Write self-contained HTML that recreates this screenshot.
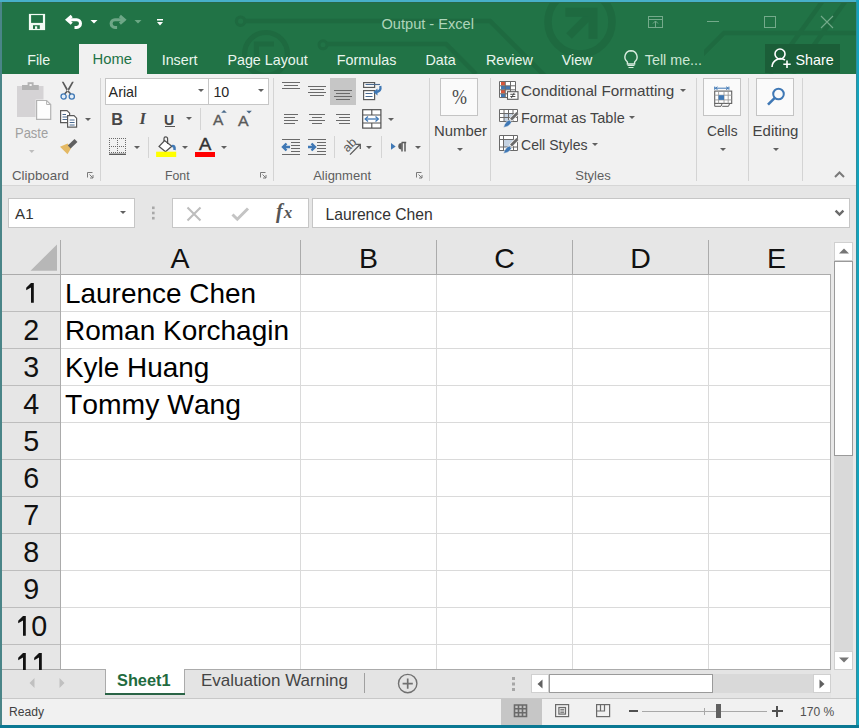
<!DOCTYPE html>
<html><head><meta charset="utf-8"><style>
html,body{margin:0;padding:0;}
body{width:859px;height:728px;position:relative;overflow:hidden;font-family:"Liberation Sans",sans-serif;}
.a{position:absolute;}
.t{position:absolute;line-height:1;white-space:nowrap;}
svg{display:block;overflow:visible}
</style></head><body>
<div class="a" style="left:0px;top:0px;width:859px;height:728px;background:#4a8588;"></div>
<div class="a" style="left:0px;top:0px;width:859px;height:2px;background:#47b0c9;"></div>
<div class="a" style="left:856px;top:0px;width:3px;height:728px;background:#14a3bd;"></div>
<div class="a" style="left:856px;top:2px;width:1px;height:723px;background:#2f8f9e;"></div>
<div class="a" style="left:0px;top:725px;width:859px;height:3px;background:#0b7893;"></div>
<div class="a" style="left:2px;top:2px;width:854px;height:72px;background:#217346;"></div>
<div class="a" style="left:2px;top:2px;width:854px;height:1px;background:#2a6848;"></div>
<svg class="a" style="left:0px;top:0px;" width="859" height="74" viewBox="0 0 859 74">
<clipPath id="tbc"><rect x="2" y="3" width="854" height="71"/></clipPath>
<g stroke="#1e6a40" fill="none" clip-path="url(#tbc)">
<circle cx="240.6" cy="21.2" r="4.2" stroke-width="3.2"/>
<path d="M245 21 H490 L545 76" stroke-width="4.5"/>
<circle cx="323" cy="44.8" r="4" stroke-width="3"/>
<path d="M327 44 H446 L476 74" stroke-width="4.5"/>
<circle cx="266" cy="53.9" r="21.4" stroke-width="5.2"/>
<path d="M256.4 66 V44 H274" stroke-width="5"/>
<circle cx="580" cy="22" r="32" stroke-width="7.5"/>
<path d="M569 36 L591 14" stroke-width="8"/>
<path d="M565.4 12.2 H593 V38.7" stroke-width="9"/>
<path d="M690 67 L724 33 H856" stroke-width="4.5"/>
<path d="M770 74 L822 2" stroke-width="4.5"/>
<path d="M793 74 L845 2" stroke-width="4.5"/>
</g></svg>
<div class="a" style="left:612px;top:44px;width:92px;height:30px;background:#217346;"></div>
<svg class="a" style="left:26px;top:12px;" width="22" height="20" viewBox="0 0 22 20">
<rect x="2.9" y="1.9" width="16.2" height="16.2" fill="#f2fbf4"/>
<rect x="5.1" y="3.1" width="11.8" height="7.8" fill="#217346"/>
<rect x="7" y="13.2" width="6.8" height="3.7" fill="#217346"/>
<rect x="9" y="14.3" width="2.2" height="2.6" fill="#f2fbf4"/></svg>
<svg class="a" style="left:62px;top:13px;" width="24" height="18" viewBox="0 0 24 18">
<path d="M5.3 6.8 H14.7 A3.8 3.8 0 0 1 14.7 14.4 H12.5" fill="none" stroke="#ffffff" stroke-width="3"/>
<path d="M9.7 3 L5.3 6.8 L9.7 10.6" fill="none" stroke="#ffffff" stroke-width="3"/></svg>
<svg class="a" style="left:89px;top:18px;" width="10" height="7" viewBox="0 0 10 7"><path d="M1.5 2 H8.5 L5 5.5 Z" fill="#ffffff"/></svg>
<svg class="a" style="left:106px;top:13px;" width="24" height="18" viewBox="0 0 24 18">
<path d="M18.3 6.8 H8.9 A3.8 3.8 0 0 0 8.9 14.4 H11.1" fill="none" stroke="#6ea787" stroke-width="3"/>
<path d="M13.9 3 L18.3 6.8 L13.9 10.6" fill="none" stroke="#6ea787" stroke-width="3"/></svg>
<svg class="a" style="left:133px;top:18px;" width="10" height="7" viewBox="0 0 10 7"><path d="M1.5 2 H8.5 L5 5.5 Z" fill="#6aa884"/></svg>
<svg class="a" style="left:155px;top:17px;" width="10" height="11" viewBox="0 0 10 11"><rect x="2" y="2" width="6" height="1.5" fill="#ffffff"/><path d="M2 5 H8 L5 8.5 Z" fill="#ffffff"/></svg>
<svg class="a" style="left:646px;top:14px;" width="19" height="16" viewBox="0 0 19 16"><rect x="2.5" y="2.5" width="14" height="11" fill="none" stroke="#74aa8b" stroke-width="1"/><path d="M2.5 5.5 H16.5 M9.5 13 V7 M7 9.5 L9.5 7 L12 9.5" fill="none" stroke="#74aa8b" stroke-width="1"/></svg>
<svg class="a" style="left:705px;top:19px;" width="16" height="5" viewBox="0 0 16 5"><path d="M2 2.5 H14" stroke="#74aa8b" stroke-width="1"/></svg>
<svg class="a" style="left:762px;top:14px;" width="16" height="16" viewBox="0 0 16 16"><rect x="2.5" y="2.5" width="11" height="11" fill="none" stroke="#74aa8b" stroke-width="1"/></svg>
<svg class="a" style="left:819px;top:14px;" width="16" height="16" viewBox="0 0 16 16"><path d="M2 2 L14 14 M14 2 L2 14" stroke="#74aa8b" stroke-width="1.1"/></svg>
<div class="t" style="left:381.50px;top:17.44px;font-size:14.6px;color:#aed5ba;">Output - Excel</div>
<div class="a" style="left:79px;top:44px;width:68px;height:30px;background:#f1f1f1;"></div>
<div class="t" style="left:27.20px;top:52.90px;font-size:14.3px;color:#eaf6ee;">File</div>
<div class="t" style="left:161.70px;top:52.90px;font-size:14.3px;color:#eaf6ee;">Insert</div>
<div class="t" style="left:227.40px;top:52.90px;font-size:14.3px;color:#eaf6ee;">Page Layout</div>
<div class="t" style="left:336.80px;top:52.90px;font-size:14.3px;color:#eaf6ee;">Formulas</div>
<div class="t" style="left:425.50px;top:52.90px;font-size:14.3px;color:#eaf6ee;">Data</div>
<div class="t" style="left:485.90px;top:52.90px;font-size:14.3px;color:#eaf6ee;">Review</div>
<div class="t" style="left:561.70px;top:52.90px;font-size:14.3px;color:#eaf6ee;">View</div>
<div class="t" style="left:92.50px;top:51.97px;font-size:14.8px;color:#217346;">Home</div>
<svg class="a" style="left:622px;top:48px;" width="18" height="22" viewBox="0 0 18 22"><path d="M9 2.7 A6.3 6.3 0 0 1 12.6 14 V16 H5.4 V14 A6.3 6.3 0 0 1 9 2.7 Z" fill="none" stroke="#d8ecdf" stroke-width="1.4"/><path d="M5.5 17.5 H12.5 M6.5 19.5 H11.5" stroke="#d8ecdf" stroke-width="1.2"/></svg>
<div class="t" style="left:644.80px;top:52.90px;font-size:14.3px;color:#cde6d5;">Tell me...</div>
<div class="a" style="left:765px;top:44px;width:75px;height:29px;background:#1b5e38;"></div>
<svg class="a" style="left:769px;top:46px;" width="26" height="24" viewBox="0 0 26 24"><circle cx="11" cy="8" r="5" fill="none" stroke="#ffffff" stroke-width="1.6"/><path d="M3 21 A8.5 8.5 0 0 1 16 14" fill="none" stroke="#ffffff" stroke-width="1.6"/><path d="M18 14.5 V22 M14.3 18.3 H21.7" stroke="#ffffff" stroke-width="1.6"/></svg>
<div class="t" style="left:795.50px;top:53.40px;font-size:14.3px;color:#ffffff;">Share</div>
<div class="a" style="left:2px;top:74px;width:854px;height:111px;background:#f1f1f1;"></div>
<div class="a" style="left:2px;top:185px;width:854px;height:1px;background:#d6d6d6;"></div>
<svg class="a" style="left:14px;top:80px;" width="40" height="42" viewBox="0 0 40 42">
<rect x="3" y="6" width="26.5" height="31" fill="#d5d3d5"/>
<rect x="8" y="5" width="16.8" height="5" fill="#b3b3b3"/>
<rect x="13.6" y="2.2" width="6" height="3.5" fill="#b3b3b3"/>
<rect x="15.5" y="4" width="2.2" height="2" fill="#f1f1f1"/>
<path d="M21.6 19.5 H33 L37.7 24 V40.3 H21.6 Z" fill="#f1f1f1"/>
<path d="M22.6 20.5 H32.6 L36.7 24.5 V39.3 H22.6 Z" fill="#fdfdfd" stroke="#b3b3b3" stroke-width="1.2"/>
<path d="M32.6 20.5 V24.5 H36.7" fill="none" stroke="#b3b3b3" stroke-width="1"/></svg>
<div class="t" style="left:14.60px;top:125.88px;font-size:14.2px;color:#a0a0a0;transform:scaleX(0.9143);transform-origin:0 0;">Paste</div>
<svg class="a" style="left:27.5px;top:149px;" width="7.5" height="5" viewBox="0 0 7.5 5"><path d="M1 1 H6.5 L3.75 4 Z" fill="#bdbdbd"/></svg>
<svg class="a" style="left:58px;top:80px;" width="20" height="22" viewBox="0 0 20 22">
<path d="M3.8 1.8 L5.6 1.8 L10.6 10.5 L9.4 12.3 Z M15.8 1.8 L14 1.8 L8.9 10.5 L10.1 12.3 Z" fill="#5a5a5a"/>
<path d="M9.2 11.2 L6.6 14 M10.2 11.2 L12.8 14" stroke="#5a5a5a" stroke-width="1.6"/>
<circle cx="5.6" cy="16.5" r="2.6" fill="#e4eef8" stroke="#3f78b5" stroke-width="1.3"/>
<circle cx="13.8" cy="16.5" r="2.6" fill="#e4eef8" stroke="#3f78b5" stroke-width="1.3"/></svg>
<svg class="a" style="left:58px;top:108px;" width="22" height="22" viewBox="0 0 22 22">
<path d="M2.6 2.6 H9 L11.6 5.2 V14.6 H2.6 Z" fill="#fff" stroke="#5a5a5a" stroke-width="1.2"/>
<path d="M4.5 6.5 H8 M4.5 9 H9.5 M4.5 11.5 H9.5" stroke="#4a6a90" stroke-width="1"/>
<path d="M9.6 7.6 H16 L18.6 10.2 V19.2 H9.6 Z" fill="#fff" stroke="#5a5a5a" stroke-width="1.2"/>
<path d="M11.6 12 H16.6 M11.6 14.5 H16.6 M11.6 17 H16.6" stroke="#4a6a90" stroke-width="1"/></svg>
<svg class="a" style="left:84.2px;top:116.6px;" width="8" height="5" viewBox="0 0 8 5"><path d="M1 1 H7 L4.0 4 Z" fill="#606060"/></svg>
<svg class="a" style="left:58px;top:138px;" width="22" height="18" viewBox="0 0 22 18">
<path d="M2 8.7 L9.5 5.5 L13.2 10 L9.5 16.2 Z" fill="#e4b964"/>
<path d="M11.2 9 L18 2.5" stroke="#606060" stroke-width="4.2"/></svg>
<div class="t" style="left:12.00px;top:168.90px;font-size:13px;color:#5e5e5e;transform:scaleX(1.0244);transform-origin:0 0;">Clipboard</div>
<svg class="a" style="left:86px;top:171px;" width="9" height="9" viewBox="0 0 9 9"><path d="M1.5 6.5 V1.5 H6.5" fill="none" stroke="#7a7a7a" stroke-width="1"/><path d="M3.5 3.5 L7 7 M7 4 V7 H4" fill="none" stroke="#7a7a7a" stroke-width="1"/></svg>
<div class="a" style="left:100px;top:78px;width:1px;height:103px;background:#d4d4d4;"></div>
<div class="a" style="left:105px;top:78px;width:104px;height:27px;background:#ffffff;box-sizing:border-box;border:1px solid #c6c6c6;"></div>
<div class="a" style="left:208px;top:78px;width:61px;height:27px;background:#ffffff;box-sizing:border-box;border:1px solid #c6c6c6;"></div>
<div class="t" style="left:108.60px;top:84.50px;font-size:14.3px;color:#262626;">Arial</div>
<svg class="a" style="left:197px;top:88px;" width="8" height="5" viewBox="0 0 8 5"><path d="M1 1 H7 L4.0 4 Z" fill="#606060"/></svg>
<div class="t" style="left:213.40px;top:84.50px;font-size:14.3px;color:#262626;">10</div>
<svg class="a" style="left:257px;top:88px;" width="8" height="5" viewBox="0 0 8 5"><path d="M1 1 H7 L4.0 4 Z" fill="#606060"/></svg>
<div class="t" style="left:111.30px;top:110.89px;font-size:16.2px;color:#474747;font-weight:bold;">B</div>
<div class="t" style="left:139.60px;top:110.63px;font-size:16.5px;color:#474747;font-weight:bold;font-style:italic;font-family:Liberation Serif,serif;">I</div>
<div class="t" style="left:163.60px;top:111.90px;font-size:15px;color:#474747;font-weight:bold;transform:scaleX(0.9416);transform-origin:0 0;">U</div>
<div class="a" style="left:164.5px;top:126px;width:10.0px;height:1.2999999999999972px;background:#555;"></div>
<svg class="a" style="left:185px;top:116px;" width="8" height="5" viewBox="0 0 8 5"><path d="M1 1 H7 L4.0 4 Z" fill="#606060"/></svg>
<div class="a" style="left:200px;top:108px;width:1px;height:22px;background:#d4d4d4;"></div>
<div class="t" style="left:213.00px;top:111.88px;font-size:15.5px;color:#5a5a5a;-webkit-text-stroke:0.35px #5a5a5a;">A</div>
<svg class="a" style="left:220px;top:109px;" width="9" height="6" viewBox="0 0 9 6"><path d="M1.2 3.8 H6.8 L4 1 Z" fill="#4a6a8a"/></svg>
<div class="t" style="left:237.80px;top:112.78px;font-size:15.5px;color:#5a5a5a;transform:scaleX(1.0253);transform-origin:0 0;-webkit-text-stroke:0.35px #5a5a5a;">A</div>
<svg class="a" style="left:245px;top:109px;" width="9" height="6" viewBox="0 0 9 6"><path d="M1.3 1.7 H6.9 L4.1 4.5 Z" fill="#4a6a8a"/></svg>
<svg class="a" style="left:0;top:0" width="859" height="728"><path d="M109 138h1v1h-1zM109 146h1v1h-1zM109 152h1v1h-1zM111 138h1v1h-1zM111 146h1v1h-1zM111 152h1v1h-1zM113 138h1v1h-1zM113 146h1v1h-1zM113 152h1v1h-1zM115 138h1v1h-1zM115 146h1v1h-1zM115 152h1v1h-1zM117 138h1v1h-1zM117 146h1v1h-1zM117 152h1v1h-1zM119 138h1v1h-1zM119 146h1v1h-1zM119 152h1v1h-1zM121 138h1v1h-1zM121 146h1v1h-1zM121 152h1v1h-1zM123 138h1v1h-1zM123 146h1v1h-1zM123 152h1v1h-1zM125 138h1v1h-1zM125 146h1v1h-1zM125 152h1v1h-1zM109 138h1v1h-1zM117 138h1v1h-1zM125 138h1v1h-1zM109 140h1v1h-1zM117 140h1v1h-1zM125 140h1v1h-1zM109 142h1v1h-1zM117 142h1v1h-1zM125 142h1v1h-1zM109 144h1v1h-1zM117 144h1v1h-1zM125 144h1v1h-1zM109 146h1v1h-1zM117 146h1v1h-1zM125 146h1v1h-1zM109 148h1v1h-1zM117 148h1v1h-1zM125 148h1v1h-1zM109 150h1v1h-1zM117 150h1v1h-1zM125 150h1v1h-1zM109 152h1v1h-1zM117 152h1v1h-1zM125 152h1v1h-1z" fill="#6a6a6a"/><rect x="109" y="153.6" width="17" height="1.4" fill="#5a5a5a"/></svg>
<svg class="a" style="left:133.4px;top:145px;" width="8" height="5" viewBox="0 0 8 5"><path d="M1 1 H7 L4.0 4 Z" fill="#606060"/></svg>
<div class="a" style="left:148px;top:137px;width:1px;height:21px;background:#d4d4d4;"></div>
<svg class="a" style="left:154px;top:135px;" width="24" height="24" viewBox="0 0 24 24">
<path d="M5.1 11.4 L10.6 5.6 L17.8 11.2 L11.5 16.7 Z" fill="#fff" stroke="#505050" stroke-width="1.3"/>
<path d="M10 6.2 V3.6 A1.8 1.8 0 0 1 13.6 3.6 V9" fill="none" stroke="#505050" stroke-width="1.2"/>
<path d="M17.8 11.2 Q21 10 20.5 15" fill="none" stroke="#3f78b5" stroke-width="2.6"/>
<rect x="2.1" y="16.7" width="20.1" height="5.3" fill="#ffff00"/></svg>
<svg class="a" style="left:181px;top:145px;" width="8" height="5" viewBox="0 0 8 5"><path d="M1 1 H7 L4.0 4 Z" fill="#606060"/></svg>
<div class="t" style="left:198.70px;top:136.41px;font-size:17px;color:#333;transform:scaleX(1.0848);transform-origin:0 0;-webkit-text-stroke:0.4px #333;">A</div>
<div class="a" style="left:195px;top:152px;width:20px;height:5px;background:#ff0000;"></div>
<svg class="a" style="left:220px;top:145px;" width="8" height="5" viewBox="0 0 8 5"><path d="M1 1 H7 L4.0 4 Z" fill="#606060"/></svg>
<div class="t" style="left:165.20px;top:168.60px;font-size:13px;color:#5e5e5e;transform:scaleX(0.9457);transform-origin:0 0;">Font</div>
<svg class="a" style="left:259px;top:171px;" width="9" height="9" viewBox="0 0 9 9"><path d="M1.5 6.5 V1.5 H6.5" fill="none" stroke="#7a7a7a" stroke-width="1"/><path d="M3.5 3.5 L7 7 M7 4 V7 H4" fill="none" stroke="#7a7a7a" stroke-width="1"/></svg>
<div class="a" style="left:273px;top:78px;width:1px;height:103px;background:#d4d4d4;"></div>
<div class="a" style="left:282px;top:82px;width:18px;height:1px;background:#6a6a6a;"></div>
<div class="a" style="left:284px;top:85px;width:14px;height:1px;background:#6a6a6a;"></div>
<div class="a" style="left:282px;top:88px;width:18px;height:1px;background:#6a6a6a;"></div>
<div class="a" style="left:308px;top:86px;width:18px;height:1px;background:#6a6a6a;"></div>
<div class="a" style="left:310px;top:89px;width:14px;height:1px;background:#6a6a6a;"></div>
<div class="a" style="left:308px;top:92px;width:18px;height:1px;background:#6a6a6a;"></div>
<div class="a" style="left:310px;top:95px;width:14px;height:1px;background:#6a6a6a;"></div>
<div class="a" style="left:330px;top:78px;width:26px;height:27px;background:#c6c6c6;"></div>
<div class="a" style="left:334px;top:90px;width:18px;height:1px;background:#6a6a6a;"></div>
<div class="a" style="left:336px;top:93px;width:14px;height:1px;background:#6a6a6a;"></div>
<div class="a" style="left:334px;top:96px;width:18px;height:1px;background:#6a6a6a;"></div>
<div class="a" style="left:336px;top:99px;width:14px;height:1px;background:#6a6a6a;"></div>
<svg class="a" style="left:360px;top:80px;" width="24" height="22" viewBox="0 0 24 22">
<rect x="3.6" y="2.6" width="11" height="4.8" fill="#fff" stroke="#5a5a5a" stroke-width="1.2"/>
<path d="M5.5 4.5 H20" stroke="#4a6a90" stroke-width="1.1"/>
<rect x="3.6" y="10.6" width="11" height="9" fill="#fff" stroke="#5a5a5a" stroke-width="1.2"/>
<path d="M5.5 13.5 H12.5 M5.5 16.5 H12.5" stroke="#4a6a90" stroke-width="1.1"/>
<path d="M20.3 6 Q21.5 11.5 16 12" fill="none" stroke="#3f78b5" stroke-width="2.3"/>
<path d="M13.3 12 L17.5 8.6 L17.5 15.4 Z" fill="#3f78b5"/></svg>
<div class="a" style="left:284px;top:114px;width:14px;height:1px;background:#6a6a6a;"></div>
<div class="a" style="left:284px;top:117px;width:11px;height:1px;background:#6a6a6a;"></div>
<div class="a" style="left:284px;top:120px;width:14px;height:1px;background:#6a6a6a;"></div>
<div class="a" style="left:284px;top:123px;width:11px;height:1px;background:#6a6a6a;"></div>
<div class="a" style="left:309px;top:114px;width:16px;height:1px;background:#6a6a6a;"></div>
<div class="a" style="left:312px;top:117px;width:10px;height:1px;background:#6a6a6a;"></div>
<div class="a" style="left:309px;top:120px;width:16px;height:1px;background:#6a6a6a;"></div>
<div class="a" style="left:312px;top:123px;width:10px;height:1px;background:#6a6a6a;"></div>
<div class="a" style="left:336px;top:114px;width:14px;height:1px;background:#6a6a6a;"></div>
<div class="a" style="left:339px;top:117px;width:11px;height:1px;background:#6a6a6a;"></div>
<div class="a" style="left:336px;top:120px;width:14px;height:1px;background:#6a6a6a;"></div>
<div class="a" style="left:339px;top:123px;width:11px;height:1px;background:#6a6a6a;"></div>
<svg class="a" style="left:360px;top:107px;" width="24" height="24" viewBox="0 0 24 24">
<rect x="2.7" y="2.7" width="18.2" height="18.4" fill="#fff" stroke="#505050" stroke-width="1.2"/>
<path d="M2.7 8 H20.9 M2.7 16 H20.9 M11.8 2.7 V8 M11.8 16 V21" stroke="#505050" stroke-width="1.1"/>
<path d="M5.5 12 H18" stroke="#3f78b5" stroke-width="1.3"/>
<path d="M8 9.6 L5.2 12 L8 14.4 M15.5 9.6 L18.3 12 L15.5 14.4" fill="none" stroke="#3f78b5" stroke-width="1.3"/></svg>
<svg class="a" style="left:387.2px;top:116.5px;" width="8" height="5" viewBox="0 0 8 5"><path d="M1 1 H7 L4.0 4 Z" fill="#606060"/></svg>
<div class="a" style="left:282px;top:139px;width:18px;height:1px;background:#6a6a6a;"></div>
<div class="a" style="left:282px;top:154px;width:18px;height:1px;background:#6a6a6a;"></div>
<div class="a" style="left:291px;top:142px;width:9px;height:1px;background:#6a6a6a;"></div>
<div class="a" style="left:291px;top:145px;width:9px;height:1px;background:#6a6a6a;"></div>
<div class="a" style="left:291px;top:148px;width:9px;height:1px;background:#6a6a6a;"></div>
<div class="a" style="left:291px;top:151px;width:9px;height:1px;background:#6a6a6a;"></div>
<div class="a" style="left:308px;top:139px;width:18px;height:1px;background:#6a6a6a;"></div>
<div class="a" style="left:308px;top:154px;width:18px;height:1px;background:#6a6a6a;"></div>
<div class="a" style="left:317px;top:142px;width:9px;height:1px;background:#6a6a6a;"></div>
<div class="a" style="left:317px;top:145px;width:9px;height:1px;background:#6a6a6a;"></div>
<div class="a" style="left:317px;top:148px;width:9px;height:1px;background:#6a6a6a;"></div>
<div class="a" style="left:317px;top:151px;width:9px;height:1px;background:#6a6a6a;"></div>
<svg class="a" style="left:280px;top:140px;" width="12" height="14" viewBox="0 0 12 14"><path d="M3 7 H10 M6.5 3.5 L3 7 L6.5 10.5" fill="none" stroke="#3f78b5" stroke-width="2.4"/></svg>
<svg class="a" style="left:306px;top:140px;" width="12" height="14" viewBox="0 0 12 14"><path d="M2 7 H9 M5.5 3.5 L9 7 L5.5 10.5" fill="none" stroke="#3f78b5" stroke-width="2.4"/></svg>
<div class="a" style="left:334px;top:136px;width:1px;height:22px;background:#d4d4d4;"></div>
<svg class="a" style="left:340px;top:134px;" width="24" height="24" viewBox="0 0 24 24">
<text x="9.5" y="15" text-anchor="middle" font-family="Liberation Sans" font-size="12.5" fill="#5a5a5a" transform="rotate(-45 9.5 11)">ab</text>
<path d="M10 20.6 L20.3 10.3 M15.5 10.3 H20.3 V15.1" fill="none" stroke="#5a5a5a" stroke-width="1.3"/></svg>
<svg class="a" style="left:365px;top:145px;" width="8" height="5" viewBox="0 0 8 5"><path d="M1 1 H7 L4.0 4 Z" fill="#606060"/></svg>
<div class="a" style="left:381px;top:136px;width:1px;height:22px;background:#d4d4d4;"></div>
<svg class="a" style="left:388px;top:140px;" width="20" height="14" viewBox="0 0 20 14">
<path d="M3 3 L7.7 6.4 L3 9.8 Z" fill="#3f78b5"/>
<path d="M13.5 3 A3.2 3.2 0 0 0 13.5 9.4 Z" fill="#5a5a5a"/>
<path d="M13.6 2.5 H18.2 M14 2.5 V11.4 M17 2.5 V11.4" fill="none" stroke="#5a5a5a" stroke-width="1.5"/></svg>
<svg class="a" style="left:414px;top:145px;" width="8" height="5" viewBox="0 0 8 5"><path d="M1 1 H7 L4.0 4 Z" fill="#606060"/></svg>
<div class="t" style="left:313.20px;top:168.80px;font-size:13px;color:#5e5e5e;">Alignment</div>
<svg class="a" style="left:415px;top:171px;" width="9" height="9" viewBox="0 0 9 9"><path d="M1.5 6.5 V1.5 H6.5" fill="none" stroke="#7a7a7a" stroke-width="1"/><path d="M3.5 3.5 L7 7 M7 4 V7 H4" fill="none" stroke="#7a7a7a" stroke-width="1"/></svg>
<div class="a" style="left:429px;top:78px;width:1px;height:103px;background:#d4d4d4;"></div>
<div class="a" style="left:440px;top:78px;width:38px;height:37.5px;background:#fafafa;box-sizing:border-box;border:1px solid #c4c4c4;"></div>
<div class="t" style="left:451.60px;top:87.07px;font-size:20px;color:#4a4a4a;transform:scaleX(0.8997);transform-origin:0 0;font-family:Liberation Serif,serif;">%</div>
<div class="t" style="left:433.80px;top:123.10px;font-size:15px;color:#444;transform:scaleX(0.9934);transform-origin:0 0;">Number</div>
<svg class="a" style="left:456px;top:146.6px;" width="8" height="5" viewBox="0 0 8 5"><path d="M1 1 H7 L4.0 4 Z" fill="#606060"/></svg>
<div class="a" style="left:490px;top:78px;width:1px;height:103px;background:#d4d4d4;"></div>
<svg class="a" style="left:497px;top:79px;" width="24" height="24" viewBox="0 0 24 24">
<rect x="2.5" y="2.5" width="16" height="16" fill="#fff"/>
<rect x="4" y="3" width="4" height="3.5" fill="#d9573a"/>
<rect x="4" y="7" width="9.5" height="3.5" fill="#3f78b5"/>
<rect x="4" y="11" width="4" height="3.5" fill="#d9573a"/>
<rect x="4" y="15" width="4" height="3.5" fill="#3f78b5"/>
<path d="M2.5 2.5 H18.5 V18.5 H2.5 Z M2.5 6.8 H18.5 M2.5 10.8 H18.5 M2.5 14.8 H18.5 M8.3 2.5 V18.5 M13.5 2.5 V18.5" fill="none" stroke="#6a6a6a" stroke-width="1"/>
<rect x="10.5" y="12.7" width="10.5" height="7.6" fill="#fff" stroke="#5a5a5a" stroke-width="1.1"/>
<path d="M13.3 15.3 H18.3 M13.3 17.5 H18.3 M17.2 13.8 L14.4 19" stroke="#404040" stroke-width="0.9"/></svg>
<div class="t" style="left:521.30px;top:83.30px;font-size:15px;color:#444;transform:scaleX(1.0158);transform-origin:0 0;">Conditional Formatting</div>
<svg class="a" style="left:678.5px;top:87.5px;" width="8" height="5" viewBox="0 0 8 5"><path d="M1 1 H7 L4.0 4 Z" fill="#606060"/></svg>
<svg class="a" style="left:497px;top:107px;" width="24" height="24" viewBox="0 0 24 24">
<rect x="2.5" y="2.5" width="18" height="12" fill="#fff"/>
<rect x="7" y="6.5" width="9" height="8" fill="#c5d3e3"/>
<path d="M2.5 2.5 H20.5 V14.5 H2.5 Z M2.5 6.5 H20.5 M2.5 10.5 H20.5 M7 2.5 V14.5 M11.5 2.5 V14.5 M16 2.5 V14.5" fill="none" stroke="#6a6a6a" stroke-width="1"/>
<path d="M13.5 13 L20.5 6" stroke="#f1f1f1" stroke-width="4.5"/>
<path d="M14 12.5 L20.5 6" stroke="#6a6a6a" stroke-width="2.6"/>
<path d="M6.5 20.5 Q8 14.5 12.3 13 L14.5 15.2 Q13 19.5 6.5 20.5 Z" fill="#3f78b5" stroke="#f1f1f1" stroke-width="0.6"/></svg>
<div class="t" style="left:521.30px;top:110.30px;font-size:15px;color:#444;transform:scaleX(0.9667);transform-origin:0 0;">Format as Table</div>
<svg class="a" style="left:628.4px;top:115px;" width="8" height="5" viewBox="0 0 8 5"><path d="M1 1 H7 L4.0 4 Z" fill="#606060"/></svg>
<svg class="a" style="left:497px;top:133px;" width="24" height="24" viewBox="0 0 24 24">
<rect x="2.5" y="2.5" width="18" height="15" fill="#fff"/>
<rect x="6.5" y="6.5" width="10" height="7.5" fill="#c5d3e3"/>
<path d="M2.5 2.5 H20.5 V17.5 H2.5 Z M2.5 6.5 H20.5 M2.5 14 H20.5 M6.5 2.5 V17.5 M16.5 2.5 V17.5" fill="none" stroke="#6a6a6a" stroke-width="1"/>
<path d="M13.5 13 L20.5 6" stroke="#f1f1f1" stroke-width="4.5"/>
<path d="M14 12.5 L20.5 6" stroke="#6a6a6a" stroke-width="2.6"/>
<path d="M6.5 20.5 Q8 14.5 12.3 13 L14.5 15.2 Q13 19.5 6.5 20.5 Z" fill="#3f78b5" stroke="#f1f1f1" stroke-width="0.6"/></svg>
<div class="t" style="left:521.30px;top:136.70px;font-size:15px;color:#444;transform:scaleX(0.9385);transform-origin:0 0;">Cell Styles</div>
<svg class="a" style="left:591.2px;top:142px;" width="8" height="5" viewBox="0 0 8 5"><path d="M1 1 H7 L4.0 4 Z" fill="#606060"/></svg>
<div class="t" style="left:575.30px;top:168.80px;font-size:13px;color:#5e5e5e;">Styles</div>
<div class="a" style="left:696px;top:78px;width:1px;height:103px;background:#d4d4d4;"></div>
<div class="a" style="left:703px;top:78px;width:38px;height:38px;background:#fafafa;box-sizing:border-box;border:1px solid #c4c4c4;"></div>
<svg class="a" style="left:711px;top:84px;" width="24" height="24" viewBox="0 0 24 24">
<path d="M4.2 4.2 H17.4 M3.7 2.6 V5.8 M17.9 2.6 V5.8" stroke="#3f78b5" stroke-width="1"/>
<path d="M6.5 2.8 L4.3 4.2 L6.5 5.6 M15.1 2.8 L17.3 4.2 L15.1 5.6" fill="none" stroke="#3f78b5" stroke-width="1"/>
<rect x="3.7" y="7.1" width="17" height="12.3" fill="#fff" stroke="#606060" stroke-width="1.1"/>
<path d="M3.7 11.2 H20.7 M3.7 15.9 H20.7 M7.6 7.1 V19.4 M13 7.1 V19.4 M17.2 7.1 V19.4" stroke="#9a9a9a" stroke-width="0.9"/>
<rect x="7.6" y="11.2" width="5.4" height="4.7" fill="#3f78b5"/>
<path d="M3.7 19.4 V22.3 H10 L11.2 19.4 M11.2 22.3 H17.5 L18.7 19.4" fill="none" stroke="#606060" stroke-width="1"/></svg>
<div class="t" style="left:707.30px;top:123.30px;font-size:15px;color:#444;transform:scaleX(0.9148);transform-origin:0 0;">Cells</div>
<svg class="a" style="left:719px;top:147.4px;" width="8" height="5" viewBox="0 0 8 5"><path d="M1 1 H7 L4.0 4 Z" fill="#606060"/></svg>
<div class="a" style="left:748px;top:78px;width:1px;height:103px;background:#d4d4d4;"></div>
<div class="a" style="left:756px;top:78px;width:38px;height:38px;background:#fafafa;box-sizing:border-box;border:1px solid #c4c4c4;"></div>
<svg class="a" style="left:764px;top:86px;" width="24" height="22" viewBox="0 0 24 22">
<circle cx="14.5" cy="8" r="5.3" fill="none" stroke="#3f78b5" stroke-width="2"/>
<path d="M10.8 11.8 L4 18.6" stroke="#3f78b5" stroke-width="2.6"/></svg>
<div class="t" style="left:752.60px;top:123.30px;font-size:15px;color:#444;">Editing</div>
<svg class="a" style="left:772px;top:147.4px;" width="8" height="5" viewBox="0 0 8 5"><path d="M1 1 H7 L4.0 4 Z" fill="#606060"/></svg>
<div class="a" style="left:802px;top:78px;width:1px;height:103px;background:#d4d4d4;"></div>
<svg class="a" style="left:832px;top:169px;" width="16" height="11" viewBox="0 0 16 11"><path d="M3 8 L7.5 3.5 L12 8" fill="none" stroke="#7a7a7a" stroke-width="2"/></svg>
<div class="a" style="left:2px;top:186px;width:854px;height:54px;background:#e6e6e6;"></div>
<div class="a" style="left:8px;top:198px;width:127px;height:30px;background:#fff;box-sizing:border-box;border:1px solid #c6c6c6;"></div>
<div class="t" style="left:15.00px;top:206.13px;font-size:15.2px;color:#333;">A1</div>
<svg class="a" style="left:118.5px;top:210px;" width="8" height="5" viewBox="0 0 8 5"><path d="M1 1 H7 L4.0 4 Z" fill="#606060"/></svg>
<svg class="a" style="left:150px;top:204px;" width="7" height="18" viewBox="0 0 7 18"><rect x="2" y="2.5" width="2.6" height="2.6" fill="#a8a8a8"/><rect x="2" y="7.7" width="2.6" height="2.6" fill="#a8a8a8"/><rect x="2" y="12.9" width="2.6" height="2.6" fill="#a8a8a8"/></svg>
<div class="a" style="left:172px;top:198px;width:137px;height:30px;background:#fff;box-sizing:border-box;border:1px solid #c6c6c6;"></div>
<svg class="a" style="left:184px;top:204px;" width="22" height="20" viewBox="0 0 22 20"><path d="M3.5 3.5 L16.5 16.5 M16.5 3.5 L3.5 16.5" stroke="#bdbdbd" stroke-width="2.1"/></svg>
<svg class="a" style="left:229px;top:204px;" width="22" height="20" viewBox="0 0 22 20"><path d="M3.5 10.5 L8.3 15.2 L19 4.5" fill="none" stroke="#c4c4c4" stroke-width="3"/></svg>
<div class="t" style="left:276px;top:201px;font-size:20px;color:#555;font-family:'Liberation Serif',serif;font-weight:bold;font-style:italic;">f<span style="font-size:17px;margin-left:1px">x</span></div>
<div class="a" style="left:312px;top:198px;width:538px;height:30px;background:#fff;box-sizing:border-box;border:1px solid #c6c6c6;"></div>
<div class="t" style="left:325.50px;top:206.51px;font-size:15.7px;color:#333;">Laurence Chen</div>
<svg class="a" style="left:833px;top:208px;" width="14" height="10" viewBox="0 0 14 10"><path d="M2.6 2.6 L6.5 6.5 L10.4 2.6" fill="none" stroke="#6a6a6a" stroke-width="2.4"/></svg>
<div class="a" style="left:2px;top:240px;width:829px;height:35px;background:#e6e6e6;"></div>
<div class="a" style="left:2px;top:275px;width:59px;height:394px;background:#e6e6e6;"></div>
<div class="a" style="left:61px;top:275px;width:769px;height:394px;background:#fff;"></div>
<svg class="a" style="left:28px;top:242px;" width="32" height="32" viewBox="0 0 32 32"><path d="M2.5 28.8 L29 2.4 V28.8 Z" fill="#b7b7b7"/></svg>
<div class="a" style="left:300px;top:240px;width:1px;height:34px;background:#ababab;"></div>
<div class="a" style="left:436px;top:240px;width:1px;height:34px;background:#ababab;"></div>
<div class="a" style="left:572px;top:240px;width:1px;height:34px;background:#ababab;"></div>
<div class="a" style="left:708px;top:240px;width:1px;height:34px;background:#ababab;"></div>
<div class="a" style="left:60px;top:240px;width:1px;height:429px;background:#ababab;"></div>
<div class="a" style="left:2px;top:274px;width:828px;height:1px;background:#ababab;"></div>
<div class="a" style="left:300px;top:275px;width:1px;height:394px;background:#dadada;"></div>
<div class="a" style="left:436px;top:275px;width:1px;height:394px;background:#dadada;"></div>
<div class="a" style="left:572px;top:275px;width:1px;height:394px;background:#dadada;"></div>
<div class="a" style="left:708px;top:275px;width:1px;height:394px;background:#dadada;"></div>
<div class="a" style="left:61px;top:311px;width:769px;height:1px;background:#dadada;"></div>
<div class="a" style="left:2px;top:311px;width:58px;height:1px;background:#bdbdbd;"></div>
<div class="a" style="left:61px;top:348px;width:769px;height:1px;background:#dadada;"></div>
<div class="a" style="left:2px;top:348px;width:58px;height:1px;background:#bdbdbd;"></div>
<div class="a" style="left:61px;top:385px;width:769px;height:1px;background:#dadada;"></div>
<div class="a" style="left:2px;top:385px;width:58px;height:1px;background:#bdbdbd;"></div>
<div class="a" style="left:61px;top:422px;width:769px;height:1px;background:#dadada;"></div>
<div class="a" style="left:2px;top:422px;width:58px;height:1px;background:#bdbdbd;"></div>
<div class="a" style="left:61px;top:459px;width:769px;height:1px;background:#dadada;"></div>
<div class="a" style="left:2px;top:459px;width:58px;height:1px;background:#bdbdbd;"></div>
<div class="a" style="left:61px;top:496px;width:769px;height:1px;background:#dadada;"></div>
<div class="a" style="left:2px;top:496px;width:58px;height:1px;background:#bdbdbd;"></div>
<div class="a" style="left:61px;top:533px;width:769px;height:1px;background:#dadada;"></div>
<div class="a" style="left:2px;top:533px;width:58px;height:1px;background:#bdbdbd;"></div>
<div class="a" style="left:61px;top:570px;width:769px;height:1px;background:#dadada;"></div>
<div class="a" style="left:2px;top:570px;width:58px;height:1px;background:#bdbdbd;"></div>
<div class="a" style="left:61px;top:607px;width:769px;height:1px;background:#dadada;"></div>
<div class="a" style="left:2px;top:607px;width:58px;height:1px;background:#bdbdbd;"></div>
<div class="a" style="left:61px;top:644px;width:769px;height:1px;background:#dadada;"></div>
<div class="a" style="left:2px;top:644px;width:58px;height:1px;background:#bdbdbd;"></div>
<div class="a" style="left:830px;top:274px;width:1px;height:396px;background:#ababab;"></div>
<div class="a" style="left:2px;top:669px;width:829px;height:1px;background:#ababab;"></div>
<div class="t" style="left:170.50px;top:243.87px;font-size:28.5px;color:#111;">A</div>
<div class="t" style="left:359.00px;top:243.87px;font-size:28.5px;color:#111;">B</div>
<div class="t" style="left:494.21px;top:243.87px;font-size:28.5px;color:#111;">C</div>
<div class="t" style="left:630.21px;top:243.87px;font-size:28.5px;color:#111;">D</div>
<div class="t" style="left:767.00px;top:243.87px;font-size:28.5px;color:#111;">E</div>
<svg class="a" style="left:0;top:0" width="859" height="728"><path d="M31.00 283.00 H33.80 V302.80 H31.00 V287.40 L26.20 290.20 V287.80 Z" fill="#111"/></svg>
<div class="t" style="left:23.30px;top:315.51px;font-size:28.7px;color:#111;">2</div>
<div class="t" style="left:23.30px;top:352.51px;font-size:28.7px;color:#111;">3</div>
<div class="t" style="left:23.30px;top:389.51px;font-size:28.7px;color:#111;">4</div>
<div class="t" style="left:23.30px;top:426.51px;font-size:28.7px;color:#111;">5</div>
<div class="t" style="left:23.30px;top:463.51px;font-size:28.7px;color:#111;">6</div>
<div class="t" style="left:23.30px;top:500.51px;font-size:28.7px;color:#111;">7</div>
<div class="t" style="left:23.30px;top:537.51px;font-size:28.7px;color:#111;">8</div>
<div class="t" style="left:23.30px;top:574.51px;font-size:28.7px;color:#111;">9</div>
<svg class="a" style="left:0;top:0" width="859" height="728"><path d="M23.00 616.00 H25.80 V635.80 H23.00 V620.40 L18.20 623.20 V620.80 Z" fill="#111"/></svg>
<div class="t" style="left:31.30px;top:611.51px;font-size:28.7px;color:#111;">0</div>
<svg class="a" style="left:0;top:0" width="859" height="728"><path d="M23.00 653.00 H25.80 V672.80 H23.00 V657.40 L18.20 660.20 V657.80 Z" fill="#111"/></svg>
<svg class="a" style="left:0;top:0" width="859" height="728"><path d="M39.00 653.00 H41.80 V672.80 H39.00 V657.40 L34.20 660.20 V657.80 Z" fill="#111"/></svg>
<div class="t" style="left:65.00px;top:278.84px;font-size:28.3px;color:#000;transform:scaleX(0.9870);transform-origin:0 0;font-kerning:none;">Laurence Chen</div>
<div class="t" style="left:65.00px;top:315.84px;font-size:28.3px;color:#000;transform:scaleX(0.9890);transform-origin:0 0;font-kerning:none;">Roman Korchagin</div>
<div class="t" style="left:65.00px;top:352.84px;font-size:28.3px;color:#000;transform:scaleX(0.9860);transform-origin:0 0;font-kerning:none;">Kyle Huang</div>
<div class="t" style="left:65.00px;top:389.84px;font-size:28.3px;color:#000;font-kerning:none;">Tommy Wang</div>
<div class="a" style="left:831px;top:240px;width:25px;height:430px;background:#e8e8e8;"></div>
<div class="a" style="left:834px;top:261px;width:19px;height:390px;background:#d9d9d9;"></div>
<div class="a" style="left:834px;top:242px;width:19px;height:19px;background:#fff;box-sizing:border-box;border:1px solid #d0d0d0;"></div>
<svg class="a" style="left:838px;top:247px;" width="12" height="8" viewBox="0 0 12 8"><path d="M1 6.5 H11 L6 1.5 Z" fill="#767676"/></svg>
<div class="a" style="left:834px;top:261px;width:19px;height:195px;background:#fff;box-sizing:border-box;border:1px solid #9a9a9a;"></div>
<div class="a" style="left:834px;top:651px;width:19px;height:19px;background:#fff;box-sizing:border-box;border:1px solid #d0d0d0;"></div>
<svg class="a" style="left:838px;top:656px;" width="12" height="8" viewBox="0 0 12 8"><path d="M1 1.5 H11 L6 6.5 Z" fill="#767676"/></svg>
<div class="a" style="left:2px;top:670px;width:854px;height:28px;background:#e4e4e4;"></div>
<div class="a" style="left:831px;top:670px;width:25px;height:28px;background:#e8e8e8;"></div>
<svg class="a" style="left:26px;top:676px;" width="12" height="14" viewBox="0 0 12 14"><path d="M8.5 2 L3.5 7 L8.5 12 Z" fill="#c0c0c0"/></svg>
<svg class="a" style="left:56px;top:676px;" width="12" height="14" viewBox="0 0 12 14"><path d="M3.5 2 L8.5 7 L3.5 12 Z" fill="#c0c0c0"/></svg>
<div class="a" style="left:105px;top:669px;width:80px;height:26px;background:#fff;"></div>
<div class="a" style="left:105px;top:669px;width:1px;height:26px;background:#ababab;"></div>
<div class="a" style="left:184px;top:669px;width:1px;height:26px;background:#ababab;"></div>
<div class="a" style="left:105px;top:693px;width:80px;height:2px;background:#2a6446;"></div>
<div class="t" style="left:117.30px;top:673.06px;font-size:16px;color:#1f6b40;font-weight:bold;transform:scaleX(1.0196);transform-origin:0 0;">Sheet1</div>
<div class="t" style="left:201.00px;top:672.29px;font-size:16.2px;color:#444;transform:scaleX(1.0509);transform-origin:0 0;">Evaluation Warning</div>
<div class="a" style="left:364px;top:673px;width:1px;height:20px;background:#a0a0a0;"></div>
<svg class="a" style="left:396px;top:672px;" width="24" height="24" viewBox="0 0 24 24"><circle cx="11.7" cy="11.6" r="9.2" fill="none" stroke="#707070" stroke-width="1.4"/><path d="M11.7 6.5 V16.7 M6.6 11.6 H16.8" stroke="#707070" stroke-width="1.7"/></svg>
<svg class="a" style="left:511px;top:676px;" width="6" height="16" viewBox="0 0 6 16"><rect x="1" y="1" width="3" height="3" fill="#a6a6a6"/><rect x="1" y="6.5" width="3" height="3" fill="#a6a6a6"/><rect x="1" y="12" width="3" height="3" fill="#a6a6a6"/></svg>
<div class="a" style="left:531px;top:674px;width:282px;height:19px;background:#d9d9d9;"></div>
<div class="a" style="left:531px;top:674px;width:18px;height:19px;background:#fff;box-sizing:border-box;border:1px solid #d0d0d0;"></div>
<svg class="a" style="left:535px;top:678px;" width="10" height="12" viewBox="0 0 10 12"><path d="M7.5 1.5 L2.5 6 L7.5 10.5 Z" fill="#606060"/></svg>
<div class="a" style="left:549px;top:674px;width:164px;height:19px;background:#fff;box-sizing:border-box;border:1px solid #9a9a9a;"></div>
<div class="a" style="left:813px;top:674px;width:18px;height:19px;background:#fff;box-sizing:border-box;border:1px solid #d0d0d0;"></div>
<svg class="a" style="left:817px;top:678px;" width="10" height="12" viewBox="0 0 10 12"><path d="M2.5 1.5 L7.5 6 L2.5 10.5 Z" fill="#606060"/></svg>
<div class="a" style="left:2px;top:698px;width:854px;height:1px;background:#c8c8c8;"></div>
<div class="a" style="left:2px;top:699px;width:854px;height:26px;background:#f1f1f1;"></div>
<div class="t" style="left:8.60px;top:705.62px;font-size:12.5px;color:#404040;transform:scaleX(0.9686);transform-origin:0 0;">Ready</div>
<div class="a" style="left:501px;top:699px;width:41px;height:26px;background:#c6c6c6;"></div>
<svg class="a" style="left:512px;top:703px;" width="18" height="16" viewBox="0 0 18 16"><path d="M2.5 2 H14.5 V13.5 H2.5 Z M6.5 2 V13.5 M10.5 2 V13.5 M2.5 5.8 H14.5 M2.5 9.7 H14.5" fill="none" stroke="#6a6a6a" stroke-width="1.6"/></svg>
<svg class="a" style="left:553px;top:703px;" width="18" height="16" viewBox="0 0 18 16"><rect x="2.6" y="1.6" width="13" height="12" fill="none" stroke="#6a6a6a" stroke-width="1.2"/><rect x="5.9" y="4.5" width="6.6" height="6.6" fill="none" stroke="#6a6a6a" stroke-width="1.2"/><path d="M7.3 6.4 H11.2 M7.3 8 H11.2 M7.3 9.6 H11.2" stroke="#6a6a6a" stroke-width="0.9"/></svg>
<svg class="a" style="left:594px;top:703px;" width="18" height="16" viewBox="0 0 18 16"><rect x="2.6" y="1.6" width="13" height="12" fill="none" stroke="#6a6a6a" stroke-width="1.2"/><path d="M10.5 1.6 V8 H2.6 M6.5 1.6 V8" fill="none" stroke="#6a6a6a" stroke-width="1.2"/></svg>
<div class="a" style="left:629px;top:710px;width:9px;height:2.2000000000000455px;background:#505050;"></div>
<div class="a" style="left:642px;top:711px;width:125px;height:1px;background:#a8a8a8;"></div>
<div class="a" style="left:704px;top:708px;width:1px;height:7px;background:#a8a8a8;"></div>
<div class="a" style="left:715.8px;top:703.8px;width:5.2000000000000455px;height:14.200000000000045px;background:#606060;"></div>
<div class="a" style="left:771.5px;top:710.2px;width:11.0px;height:2.199999999999932px;background:#505050;"></div>
<div class="a" style="left:775.9px;top:705.8px;width:2.2000000000000455px;height:11.0px;background:#505050;"></div>
<div class="t" style="left:800.20px;top:705.00px;font-size:13px;color:#505050;transform:scaleX(0.9278);transform-origin:0 0;">170 %</div>
</body></html>
